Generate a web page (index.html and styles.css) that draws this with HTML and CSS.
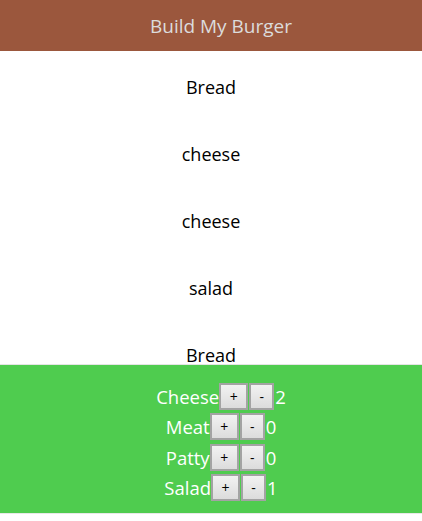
FILE: index.html
```html
<!DOCTYPE html>
<html>
<head>
<meta charset="utf-8">
<title>Build My Burger</title>
<link rel="stylesheet" href="styles.css">
</head>
<body>
<header class="toolbar">Build My Burger</header>
<main class="burger">
  <div class="ingredient">Bread</div>
  <div class="ingredient">cheese</div>
  <div class="ingredient">cheese</div>
  <div class="ingredient">salad</div>
  <div class="ingredient">Bread</div>
</main>
<section class="controls">
  <div class="control"><span class="label">Cheese</span><button class="btn btn-more">+</button><button class="btn btn-less">-</button><span class="count">2</span></div>
  <div class="control"><span class="label">Meat</span><button class="btn btn-more">+</button><button class="btn btn-less">-</button><span class="count">0</span></div>
  <div class="control"><span class="label">Patty</span><button class="btn btn-more">+</button><button class="btn btn-less">-</button><span class="count">0</span></div>
  <div class="control"><span class="label">Salad</span><button class="btn btn-more">+</button><button class="btn btn-less">-</button><span class="count">1</span></div>
</section>
</body>
</html>
```
FILE: styles.css
```css
html, body {
  margin: 0;
  padding: 0;
  background: #ffffff;
  overflow: hidden;
}
body {
  font-family: "Open Sans", "Noto Sans", sans-serif;
  color: #000;
}
.toolbar {
  height: 51px;
  background: #9b573d;
  color: #dcdcdc;
  font-size: 19px;
  display: flex;
  align-items: center;
  justify-content: center;
  padding-left: 20px;
}
.burger {
  height: 314px;
  overflow: hidden;
}
.ingredient {
  height: 67px;
  box-sizing: border-box;
  padding-top: 4px;
  display: flex;
  align-items: center;
  justify-content: center;
  font-size: 18px;
}
.controls {
  background: #4fcc4f;
  height: 149px;
  box-sizing: border-box;
  padding: 16px 0 11px 20px;
  border-bottom: 1px solid #e8e8e8;
  box-shadow: 0 -1px 0 #e4e4e4;
}
.control {
  height: 30.5px;
  display: flex;
  align-items: center;
  justify-content: center;
  color: #fff;
  font-size: 18.5px;
}
.btn {
  flex: 0 0 auto;
  height: 27px;
  box-sizing: border-box;
  margin: 0;
  padding: 0;
  border: 2px solid #a3a3a3;
  background: linear-gradient(#f2f2f2, #dcdcdc);
  font-family: "Open Sans", sans-serif;
  font-size: 14px;
  color: #000;
  display: inline-flex;
  align-items: center;
  justify-content: center;
}
.btn-more { width: 29px; }
.btn-less { width: 25px; margin-left: 1px; }
.count { margin-left: 1px; }
```
